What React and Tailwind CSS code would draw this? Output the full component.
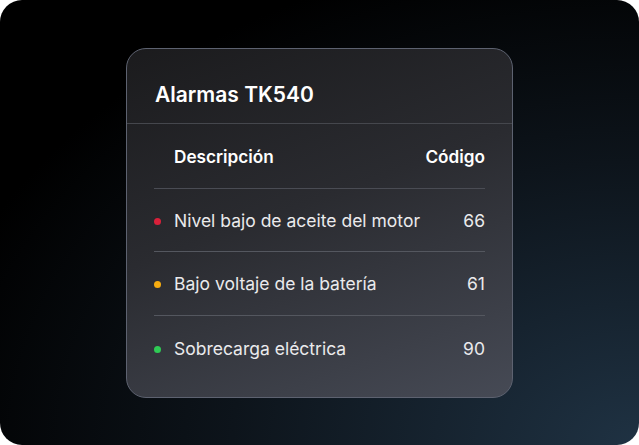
export default function App() {
  const rows = [
    { dot: "bg-[#d9203a]", text: "Nivel bajo de aceite del motor", code: "66", h: "h-[63px]" },
    { dot: "bg-[#f6ac10]", text: "Bajo voltaje de la batería", code: "61", h: "h-[64px]" },
    { dot: "bg-[#2fcb55]", text: "Sobrecarga eléctrica", code: "90", h: "h-[64px]" },
  ];
  return (
    <div className="w-[639px] h-[445px] bg-white" style={{ fontFamily: "Inter, 'Noto Sans', sans-serif" }}>
      <div className="w-full h-full rounded-[22px] bg-[radial-gradient(ellipse_at_100%_100%,#1f3243_0%,#0d141b_45%,#000000_80%)] flex items-start justify-center pt-[48px]">
        <div className="w-[387px] h-[350px] rounded-[20px] border border-[#5d6270] bg-[linear-gradient(160deg,#1b1b1d_0%,#2a2b30_45%,#464a55_100%)] flex flex-col">
          <div className="h-[75px] shrink-0 border-b border-[#45474d] pl-[28px] pt-[32px]">
            <div className="text-[21px] leading-[28px] font-semibold text-white">Alarmas TK540</div>
          </div>
          <div className="px-[27px]">
            <div className="h-[65px] border-b border-[#4a4c54] flex items-center justify-between pl-[20px] pt-[2px]">
              <span className="text-[17.2px] font-semibold text-white">Descripción</span>
              <span className="text-[17.2px] font-semibold text-white">Código</span>
            </div>
            {rows.map((r, i) => (
              <div key={i} className={r.h + " flex items-center justify-between pt-[2px] " + (i < 2 ? "border-b border-[#54575f]" : "")}>
                <div className="flex items-center">
                  <span className={"w-[7px] h-[7px] rounded-full " + r.dot}></span>
                  <span className="ml-[13px] text-[17.5px] text-[#eaeaec]">{r.text}</span>
                </div>
                <span className="text-[17.5px] text-[#eaeaec]">{r.code}</span>
              </div>
            ))}
          </div>
        </div>
      </div>
    </div>
  );
}
